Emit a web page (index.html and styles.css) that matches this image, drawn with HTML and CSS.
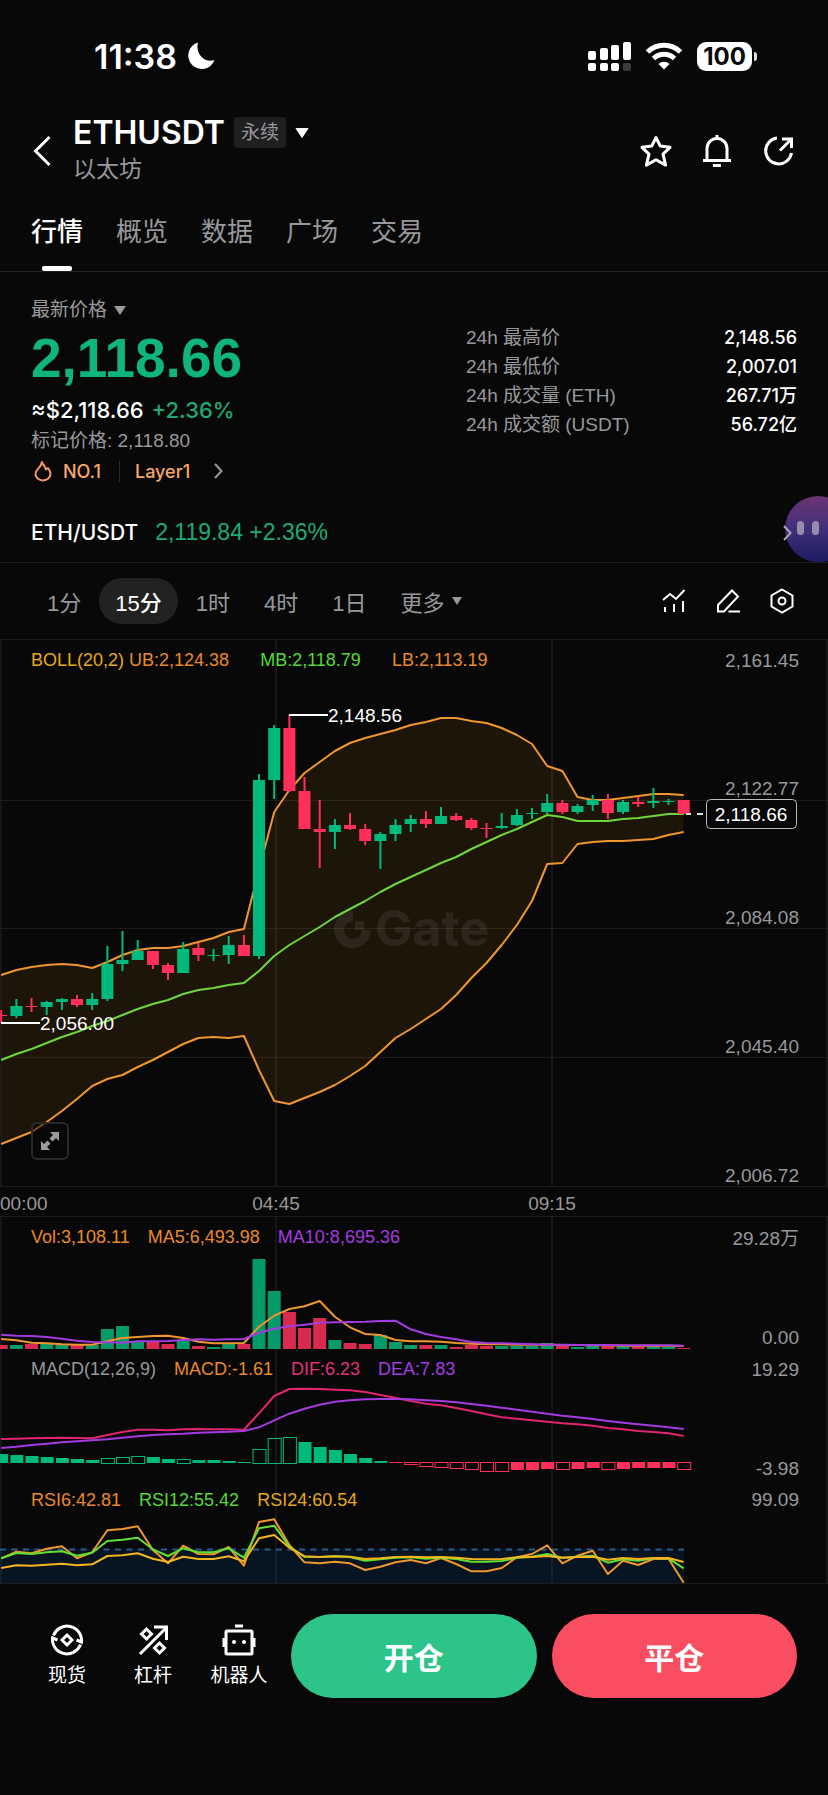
FILE: index.html
```html
<!DOCTYPE html>
<html lang="zh-CN">
<head>
<meta charset="UTF-8">
<meta name="viewport" content="width=device-width, initial-scale=1.0">
<title>ETHUSDT 永续</title>
<link rel="stylesheet" href="styles.css">
</head>
<body>
<div class="status-bar">
    <div class="status-time">
        <span>11:38</span>
        <svg width="28" height="28" viewBox="0 0 28 28"><path d="M11 .5A13.5 13.5 0 1 0 27.500 18C18 21.500 8 12 11 .5z" fill="#fff"/></svg>
    </div>
    <div class="status-icons">
        <svg width="43" height="30" viewBox="0 0 43 30" fill="#fff">
            <rect x="0" y="10" width="8" height="9" rx="2"/><rect x="12" y="7" width="8" height="12" rx="2"/>
            <rect x="23" y="4" width="8" height="15" rx="2"/><rect x="35" y="1" width="8" height="18" rx="2"/>
            <rect x="0" y="22" width="8" height="8" rx="2"/><rect x="12" y="22" width="8" height="8" rx="2"/>
            <rect x="23" y="22" width="8" height="8" rx="2"/><rect x="35" y="22" width="8" height="8" rx="2" fill="#3a3a3a"/>
        </svg>
        <svg width="38" height="28" viewBox="0 0 38 28" fill="none" stroke="#fff" stroke-width="5">
            <path d="M2.500 10a23.500 23.500 0 0 1 33 0"/>
            <path d="M8.500 16.500a15 15 0 0 1 21 0"/>
            <path d="M19 27.500l-5.500-5.500a8 8 0 0 1 11 0z" fill="#fff" stroke="none"/>
        </svg>
        <div class="battery">100</div>
    </div>
</div>

<header class="header">
    <button class="icon-btn back" aria-label="返回">
        <svg width="18" height="32" viewBox="0 0 18 32" fill="none" stroke="#fff" stroke-width="3"><path d="M16.500 2L2.500 16l14 14"/></svg>
    </button>
    <div class="title-block">
        <div class="title-row">
            <h1>ETHUSDT</h1>
            <span class="tag">永续</span>
            <svg width="14" height="10" viewBox="0 0 14 10"><path d="M1 .5h12L7 9.500z" fill="#fff" stroke="#fff" stroke-linejoin="round"/></svg>
        </div>
        <div class="subtitle">以太坊</div>
    </div>
    <div class="header-actions">
        <button class="icon-btn" aria-label="收藏">
            <svg width="34" height="34" viewBox="0 0 34 34" fill="none" stroke="#fff" stroke-width="3" stroke-linejoin="round"><path d="M17 3.500l4.300 8.600 9.700 1.200-7 6.800 2.600 11L17 25.800 7.400 31.100l2.600-11-7-6.800 9.700-1.200z"/></svg>
        </button>
        <button class="icon-btn" aria-label="提醒">
            <svg width="34" height="34" viewBox="0 0 34 34" fill="none" stroke="#fff" stroke-width="3"><path d="M7 26.500V14.500a10 10 0 0 1 20 0V26.500M3 26.500h28M17 1v4M13 31.500h8"/></svg>
        </button>
        <button class="icon-btn" aria-label="分享">
            <svg width="34" height="34" viewBox="0 0 34 34" fill="none" stroke="#fff" stroke-width="3"><path d="M16 4a13 13 0 1 0 14.500 15M21 5h9.500v9M30 5.500L19 16.500"/></svg>
        </button>
    </div>
</header>

<nav class="tabs">
    <a href="#" class="tab active">行情</a>
    <a href="#" class="tab">概览</a>
    <a href="#" class="tab">数据</a>
    <a href="#" class="tab">广场</a>
    <a href="#" class="tab">交易</a>
</nav>

<section class="summary">
    <div class="price-block">
        <button class="price-type">最新价格
            <svg width="12" height="9" viewBox="0 0 12 9"><path d="M0 0h12L6 9z" fill="#98989c"/></svg>
        </button>
        <div class="last-price">2,118.66</div>
        <div class="usd-price">≈$2,118.66 <span class="up">+2.36%</span></div>
        <div class="mark-price">标记价格: 2,118.80</div>
        <a href="#" class="rank">
            <svg width="18" height="22" viewBox="0 0 18 22" fill="none" stroke="#f59a63" stroke-width="2" stroke-linejoin="round"><path d="M8 2c1 3 3.500 4.500 4 7.500l2-1.500c1.500 2 2.500 4 2.500 6a7.500 6.500 0 0 1-15 0C1.500 9 7 8 8 2z"/></svg>
            <span class="rank-no">NO.1</span>
            <span class="rank-name">Layer1</span>
            <svg width="9" height="16" viewBox="0 0 9 16" fill="none" stroke="#98989c" stroke-width="2"><path d="M1 1l6.500 7L1 15"/></svg>
        </a>
    </div>
    <dl class="stats">
        <dt>24h 最高价</dt><dd>2,148.56</dd>
        <dt>24h 最低价</dt><dd>2,007.01</dd>
        <dt>24h 成交量 (ETH)</dt><dd>267.71万</dd>
        <dt>24h 成交额 (USDT)</dt><dd>56.72亿</dd>
    </dl>
</section>

<div class="spot-row">
    <span class="spot-pair">ETH/USDT</span>
    <span class="spot-price">2,119.84 +2.36%</span>
    <button class="assistant" aria-label="助手"><i></i><i></i></button>
    <svg class="spot-arrow" width="9" height="16" viewBox="0 0 9 16" fill="none" stroke="#a9a3b8" stroke-width="2"><path d="M1 1l6.500 7L1 15"/></svg>
</div>

<div class="intervals">
    <button class="interval">1分</button>
    <button class="interval active">15分</button>
    <button class="interval">1时</button>
    <button class="interval">4时</button>
    <button class="interval">1日</button>
    <button class="interval">更多
        <svg width="10" height="8" viewBox="0 0 10 8"><path d="M0 0h10L5 8z" fill="#98989c"/></svg>
    </button>
    <div class="chart-tools">
        <button class="icon-btn" aria-label="指标">
            <svg width="24" height="26" viewBox="0 0 24 26" fill="none" stroke="#fff" stroke-width="2"><path d="M1 12l7-6 6 5L22.500 2M3 19v5M12 16v8M21 13v11"/></svg>
        </button>
        <button class="icon-btn" aria-label="画线">
            <svg width="24" height="26" viewBox="0 0 24 26" fill="none" stroke="#fff" stroke-width="2"><path d="M2 23.500V17L16 2.500l6 6L8 23.500zM12.500 23.500H24"/></svg>
        </button>
        <button class="icon-btn" aria-label="设置">
            <svg width="24" height="26" viewBox="0 0 24 26" fill="none" stroke="#fff" stroke-width="2"><path d="M12 1.500l10.500 6v11L12 24.500l-10.500-6v-11z"/><circle cx="12" cy="13" r="3.500"/></svg>
        </button>
    </div>
</div>

<main class="charts">
    <div class="panel">
        <svg id="priceChart" class="chart" viewBox="0 640 828 577"></svg>
        <div class="legend legend-boll">
            <span class="yellow">BOLL(20,2)</span><span class="orange">UB:2,124.38</span><span class="green">MB:2,118.79</span><span class="orange">LB:2,113.19</span>
        </div>
        <button class="expand" aria-label="全屏">
            <svg width="20" height="20" viewBox="0 0 20 20" fill="#9a9a9a"><path d="M10 1h9v9l-3-3-3.500 3.500-3-3L13 4zM1 10v9h9l-3-3 3.500-3.500-3-3L4 13z"/></svg>
        </button>
    </div>
    <div class="panel">
        <svg id="volChart" class="chart" viewBox="0 17 828 132"></svg>
        <div class="legend">
            <span class="orange">Vol:3,108.11</span><span class="orange">MA5:6,493.98</span><span class="purple">MA10:8,695.36</span>
        </div>
    </div>
    <div class="panel">
        <svg id="macdChart" class="chart" viewBox="0 149 828 131"></svg>
        <div class="legend">
            <span class="gray">MACD(12,26,9)</span><span class="orange">MACD:-1.61</span><span class="pink">DIF:6.23</span><span class="purple">DEA:7.83</span>
        </div>
    </div>
    <div class="panel">
        <svg id="rsiChart" class="chart" viewBox="0 280 828 104"></svg>
        <div class="legend">
            <span class="orange">RSI6:42.81</span><span class="green">RSI12:55.42</span><span class="yellow">RSI24:60.54</span>
        </div>
    </div>
</main>

<footer class="bottom-bar">
    <a href="#" class="nav-item">
        <svg width="34" height="34" viewBox="0 0 34 34" fill="none" stroke="#fff" stroke-width="3"><path d="M3.500 12.500a14.500 14.500 0 0 1 28 6.500l-5-2M30.500 21.500a14.500 14.500 0 0 1-28-6.500l5 2M17 12l5 5-5 5-5-5z"/></svg>
        <span>现货</span>
    </a>
    <a href="#" class="nav-item">
        <svg width="34" height="34" viewBox="0 0 34 34" fill="none" stroke="#fff" stroke-width="3"><path d="M4 31L30 5M18 4h12.500v13M10.500 6l5 5-5 5-5-5zM23.500 20l5 5-5 5-5-5z"/></svg>
        <span>杠杆</span>
    </a>
    <a href="#" class="nav-item">
        <svg width="34" height="34" viewBox="0 0 34 34" fill="none" stroke="#fff" stroke-width="3"><rect x="4" y="8" width="26" height="23" rx="1"/><path d="M13 3h8M2 15v9M32 15v9"/><circle cx="12" cy="19" r="2" fill="#fff" stroke="none"/><circle cx="22" cy="19" r="2" fill="#fff" stroke="none"/></svg>
        <span>机器人</span>
    </a>
    <button class="trade open">开仓</button>
    <button class="trade close">平仓</button>
</footer>

<script>
    const STEP = 15.167;
    const GREEN = '#00b97c';
    const RED = '#ff2f5b';
    const GRID = '#1c1c1c';
    const ORANGE = '#f0962e';
    const PURPLE = '#a33be0';

    // direction, body top, body bottom, high, low
    const candles = [
        ['r', 1015, 1016, 1010, 1023], ['g', 1006, 1016, 999, 1018], ['r', 1006, 1007, 998, 1012],
        ['g', 1002, 1007, 1001, 1015], ['g', 999, 1002, 998, 1010], ['r', 999, 1005, 995, 1007],
        ['g', 999, 1005, 993, 1010], ['g', 964, 999, 946, 1001], ['g', 960, 964, 931, 971],
        ['g', 951, 960, 940, 960], ['r', 951, 965, 951, 969], ['r', 965, 973, 963, 980],
        ['g', 949, 973, 942, 973], ['r', 948, 955, 943, 961], ['g', 955, 956, 949, 961],
        ['g', 945, 955, 936, 964], ['r', 945, 956, 935, 956], ['g', 780, 956, 774, 959],
        ['g', 728, 780, 725, 799], ['r', 728, 791, 715, 792], ['r', 791, 829, 777, 829],
        ['r', 829, 832, 800, 868], ['g', 825, 832, 819, 849], ['r', 825, 829, 813, 830],
        ['r', 829, 841, 824, 845], ['g', 834, 841, 832, 869], ['g', 825, 834, 819, 841],
        ['g', 819, 824, 815, 832], ['r', 819, 824, 811, 828], ['g', 816, 824, 807, 824],
        ['r', 816, 820, 813, 821], ['r', 820, 828, 818, 830], ['r', 828, 829, 823, 838],
        ['g', 826, 828, 813, 829], ['g', 815, 825, 809, 826], ['g', 813, 814, 808, 819],
        ['g', 803, 812, 794, 814], ['r', 803, 812, 800, 814], ['g', 806, 812, 804, 814],
        ['g', 800, 805, 795, 811], ['r', 800, 813, 794, 819], ['g', 802, 812, 800, 814],
        ['r', 802, 804, 797, 807], ['g', 801, 803, 788, 808], ['g', 801, 802, 799, 805],
        ['r', 800, 814, 800, 814]
    ];

    const upper = [975, 970, 967, 965, 964, 965, 968, 962, 955, 950, 948, 948, 946, 942, 938, 932, 929, 870, 812, 790, 773, 762, 751, 743, 738, 734, 730, 725, 722, 718, 718, 721, 723, 728, 735, 744, 766, 771, 797, 800, 800, 798, 796, 794, 794, 795];
    const middle = [1060, 1054, 1049, 1043, 1037, 1032, 1026, 1021, 1015, 1009, 1004, 1000, 994, 990, 988, 985, 983, 971, 956, 945, 936, 927, 917, 909, 901, 892, 884, 877, 870, 863, 857, 849, 842, 835, 829, 822, 815, 817, 821, 821, 821, 819, 818, 816, 814, 814];
    const lower = [1144, 1138, 1132, 1122, 1111, 1099, 1086, 1079, 1075, 1067, 1060, 1052, 1044, 1038, 1037, 1038, 1036, 1070, 1101, 1104, 1098, 1092, 1085, 1076, 1066, 1052, 1038, 1029, 1019, 1009, 995, 978, 963, 945, 925, 901, 864, 863, 844, 842, 841, 841, 840, 839, 835, 832];

    const volume = [4, 4, 5, 5, 4, 4, 4, 20, 23, 8, 8, 5, 8, 3, 2, 5, 5, 90, 58, 37, 21, 31, 9, 6, 5, 14, 7, 4, 4, 4, 2, 4, 3, 3, 3, 3, 6, 3, 2, 3, 3, 3, 3, 3, 2, 1];
    const ma5 = [417, 421, 428, 430, 433, 434, 434, 424, 414, 411, 408, 407, 414, 425, 430, 430, 429, 380, 347, 327, 319, 303, 350, 382, 402, 405, 420, 424, 424, 425, 429, 431, 433, 433, 434, 434, 434, 435, 435, 436, 436, 437, 437, 437, 437, 438];
    const ma10 = [404, 407, 408, 411, 416, 422, 426, 427, 428, 424, 424, 423, 420, 418, 419, 418, 417, 398, 386, 379, 374, 368, 367, 366, 365, 363, 362, 388, 402, 411, 418, 426, 429, 430, 431, 433, 434, 434, 435, 435, 435, 436, 436, 436, 436, 437];

    // bar height, 1 when the bar is hollow
    const macd = [[9, 0], [8, 0], [7, 0], [6, 0], [5, 0], [4, 0], [3, 0], [5, 1], [6, 1], [7, 1], [6, 0], [4, 0], [4, 1], [3, 0], [3, 0], [2, 0], [1, 0], [14, 1], [25, 1], [26, 1], [21, 0], [16, 0], [13, 0], [9, 0], [5, 0], [2, 0],
        [-1, 0], [-2, 1], [-4, 1], [-5, 1], [-6, 1], [-7, 1], [-9, 1], [-9, 1], [-8, 0], [-8, 0], [-7, 0], [-7, 1], [-7, 0], [-6, 0], [-7, 1], [-7, 0], [-6, 0], [-6, 0], [-6, 0], [-7, 1]];
    const dif = [717, 716, 715, 714, 713, 714, 715, 705, 696, 689, 689, 691, 688, 687, 688, 688, 689, 640, 588, 567, 566, 567, 569, 571, 576, 585, 593, 603, 611, 616, 624, 633, 643, 652, 656, 661, 665, 670, 673, 677, 684, 688, 693, 696, 700, 708];
    const dea = [744, 740, 735, 731, 727, 724, 721, 718, 713, 709, 705, 703, 701, 698, 697, 695, 693, 682, 661, 641, 626, 614, 605, 601, 598, 597, 597, 598, 601, 603, 607, 612, 617, 623, 629, 635, 641, 647, 652, 657, 663, 668, 673, 677, 682, 687];

    const rsi6 = [1075, 1055, 1060, 1046, 1039, 1075, 1057, 991, 987, 979, 1050, 1090, 1037, 1062, 1063, 1041, 1097, 966, 958, 1035, 1087, 1090, 1085, 1090, 1110, 1100, 1087, 1080, 1090, 1074, 1092, 1114, 1114, 1104, 1072, 1062, 1036, 1090, 1067, 1052, 1122, 1082, 1095, 1077, 1076, 1148];
    const rsi12 = [1075, 1059, 1062, 1057, 1054, 1067, 1058, 1023, 1019, 1013, 1048, 1068, 1045, 1057, 1057, 1045, 1073, 985, 977, 1040, 1070, 1071, 1069, 1071, 1082, 1078, 1073, 1072, 1076, 1073, 1077, 1085, 1085, 1083, 1073, 1070, 1062, 1073, 1070, 1067, 1088, 1078, 1082, 1075, 1075, 1105];
    const rsi24 = [1104, 1096, 1097, 1094, 1091, 1096, 1093, 1068, 1066, 1060, 1076, 1086, 1070, 1077, 1077, 1069, 1084, 1015, 1005, 1043, 1069, 1071, 1069, 1070, 1077, 1075, 1071, 1070, 1072, 1071, 1073, 1077, 1078, 1077, 1072, 1071, 1068, 1073, 1071, 1070, 1079, 1074, 1077, 1074, 1074, 1086];

    function x(i) {
        return 1.2 + STEP * i;
    }

    // the indicator series are stored at three times the chart scale
    function third(series) {
        return series.map(v => v / 3);
    }

    function points(series) {
        return series.map((y, i) => `${x(i).toFixed(1)},${y.toFixed(1)}`);
    }

    function line(series, color) {
        return `<polyline points="${points(series).join(' ')}" fill="none" stroke="${color}" stroke-width="2" stroke-linejoin="round"/>`;
    }

    function rect(left, top, w, h, fill) {
        return `<rect x="${left.toFixed(1)}" y="${top}" width="${w}" height="${h}" fill="${fill}"/>`;
    }

    function verticals(top, height) {
        return [0, 275, 551, 826].map(left => rect(left, top, 2, height, '#161616')).join('');
    }

    function label(left, y, text, cls) {
        return `<text x="${left}" y="${y}" class="${cls}">${text}</text>`;
    }

    function drawPrice() {
        let out = verticals(640, 547);
        [800, 928, 1057, 1186, 1216].forEach(y => out += rect(0, y, 828, 1, GRID));

        const band = points(upper).concat(points(lower).reverse());
        out += `<polygon points="${band.join(' ')}" fill="#ffa014" fill-opacity="0.09"/>`;

        out += `<g class="watermark"><path d="M353 911v10a9 9 0 1 0 9 9h9a18.500 18.500 0 1 1-18-19zM355 921h9v9h-9z"/>`
            + `<text x="375" y="946">Gate</text></g>`;

        out += line(upper, ORANGE) + line(lower, ORANGE) + line(middle, '#6fd63a');
        candles.forEach(([dir, top, bottom, high, low], i) => {
            const color = dir === 'g' ? GREEN : RED;
            out += rect(x(i) - 1, high, 2, low - high, color);
            out += rect(x(i) - 6, top, 12, bottom - top, color);
        });

        out += rect(289, 714, 39, 2, '#fff') + label(328, 722, '2,148.56', 'mark');
        out += rect(1, 1022, 39, 2, '#fff') + label(40, 1030, '2,056.00', 'mark');

        [[667, '2,161.45'], [795, '2,122.77'], [924, '2,084.08'], [1053, '2,045.40'], [1182, '2,006.72']]
            .forEach(([y, text]) => out += label(799, y, text, 'axis end'));
        out += rect(686, 813, 5, 2, '#ddd') + rect(697, 813, 6, 2, '#ddd');
        out += '<rect x="706.5" y="799.5" width="90" height="29" rx="4" fill="#080808" stroke="#bbb"/>';
        out += label(751, 821, '2,118.66', 'mark middle');

        out += label(0, 1210, '00:00', 'axis') + label(276, 1210, '04:45', 'axis middle') + label(552, 1210, '09:15', 'axis middle');
        document.getElementById('priceChart').innerHTML = out;
    }

    function drawVolume() {
        let out = verticals(17, 132);
        volume.forEach((h, i) => {
            out += rect(x(i) - 6.5, 149 - h, 13, h, candles[i][0] === 'g' ? '#059a69' : '#d92b50');
        });
        out += line(third(ma5), ORANGE) + line(third(ma10), PURPLE);
        out += label(799, 45, '29.28万', 'axis end') + label(799, 144, '0.00', 'axis end');
        document.getElementById('volChart').innerHTML = out;
    }

    function drawMacd() {
        let out = verticals(149, 131);
        macd.forEach(([h, hollow], i) => {
            const color = h > 0 ? GREEN : RED;
            const top = h > 0 ? 263 - h : 262;
            const size = Math.abs(h);
            if (hollow) {
                out += `<rect x="${(x(i) - 6).toFixed(1)}" y="${top + 0.5}" width="13" height="${size}" fill="none" stroke="${color}"/>`;
            } else {
                out += rect(x(i) - 6, top, 13, size, color);
            }
        });
        out += line(third(dif), '#e0246e') + line(third(dea), PURPLE);
        out += label(799, 176, '19.29', 'axis end') + label(799, 275, '-3.98', 'axis end');
        document.getElementById('macdChart').innerHTML = out;
    }

    function drawRsi() {
        let out = verticals(280, 104);
        out += rect(0, 349, 684, 35, 'rgba(0, 90, 160, 0.17)');
        out += '<path d="M0 349.500H684" stroke="#2c5a8c" stroke-width="2" stroke-dasharray="6 5.500"/>';
        out += line(third(rsi6), ORANGE) + line(third(rsi12), '#62e032') + line(third(rsi24), '#f5b51e');
        out += rect(0, 383, 828, 1, GRID);
        out += label(799, 306, '99.09', 'axis end');
        document.getElementById('rsiChart').innerHTML = out;
    }

    drawPrice();
    drawVolume();
    drawMacd();
    drawRsi();
</script>
</body>
</html>
```
FILE: styles.css
```css
* {
    box-sizing: border-box;
}
body {
    margin: 0;
    background-color: #080808;
    color: #fff;
    font-family: "Liberation Sans", "Noto Sans CJK SC", sans-serif;
    overflow-x: hidden;
}
button {
    padding: 0;
    border: none;
    background: none;
    color: inherit;
    font: inherit;
    cursor: pointer;
}
a {
    color: inherit;
    text-decoration: none;
}
svg {
    display: block;
    flex: none;
}

/* status bar */
.status-bar {
    display: flex;
    justify-content: space-between;
    align-items: center;
    height: 112px;
    padding: 0 71px 0 94px;
}
.status-time {
    display: flex;
    align-items: center;
    gap: 10px;
    font: 600 34px "Inter", sans-serif;
}
.status-icons {
    display: flex;
    align-items: center;
    gap: 14px;
}
.battery {
    position: relative;
    width: 55px;
    height: 29px;
    margin-right: 5px;
    border-radius: 9px;
    background-color: #fff;
    color: #080808;
    font: 700 24px/29px "Inter", sans-serif;
    text-align: center;
}
.battery::after {
    content: "";
    position: absolute;
    top: 10px;
    right: -5px;
    width: 3px;
    height: 9px;
    border-radius: 0 4px 4px 0;
    background-color: #ddd;
}

/* header */
.header {
    display: flex;
    align-items: center;
    height: 78px;
    padding: 0 33px 0 33px;
}
.back {
    width: 40px;
}
.title-block {
    padding-bottom: 5px;
}
.title-row {
    display: flex;
    align-items: center;
    gap: 9px;
    height: 40px;
}
h1 {
    margin: 0;
    font: 600 32px "Inter", sans-serif;
}
.tag {
    padding: 0 7px;
    border-radius: 4px;
    background-color: #1f1f1f;
    color: #98989c;
    font-size: 19px;
    line-height: 31px;
}
.subtitle {
    color: #98989c;
    font-size: 23px;
    line-height: 32px;
}
.header-actions {
    display: flex;
    gap: 27px;
    margin-left: auto;
}

/* tabs */
.tabs {
    display: flex;
    gap: 33px;
    height: 82px;
    padding: 0 31px;
    border-bottom: 1px solid #242424;
}
.tab {
    position: relative;
    color: #98989c;
    font-size: 26px;
    line-height: 84px;
}
.tab.active {
    color: #fff;
    font-weight: 500;
}
.tab.active::after {
    content: "";
    position: absolute;
    bottom: 0;
    left: 50%;
    width: 30px;
    height: 5px;
    margin-left: -15px;
    border-radius: 2px;
    background-color: #fff;
}

/* price summary */
.summary {
    display: flex;
    justify-content: space-between;
    padding: 24px 31px 0;
}
.price-type {
    display: flex;
    align-items: center;
    gap: 7px;
    color: #98989c;
    font-size: 19px;
    line-height: 28px;
}
.last-price {
    height: 70px;
    color: #0fb57c;
    font-size: 55px;
    font-weight: bold;
    line-height: 68px;
}
.usd-price {
    font: 500 22px/32px "Inter", sans-serif;
}
.up {
    color: #1faa74;
}
.usd-price .up {
    margin-left: 2px;
}
.mark-price {
    color: #98989c;
    font-size: 19px;
    line-height: 29px;
}
.rank {
    display: flex;
    align-items: center;
    height: 32px;
    padding-left: 3px;
    color: #f9a869;
    font: 500 18px "Inter", sans-serif;
}
.rank-no {
    margin-left: 11px;
    padding-right: 18px;
    border-right: 1px solid #2a2a2a;
}
.rank-name {
    margin: 0 24px 0 15px;
}
.stats {
    display: grid;
    grid-template-columns: 1fr auto;
    align-content: start;
    width: 331px;
    margin: 27px 0 0;
    font-size: 19px;
    line-height: 29px;
}
.stats dt {
    color: #98989c;
}
.stats dd {
    margin: 0;
    font-family: "Inter", "Noto Sans CJK SC", sans-serif;
    font-size: 18px;
    font-weight: 500;
    text-align: right;
}

/* spot pair */
.spot-row {
    position: relative;
    display: flex;
    align-items: center;
    gap: 17px;
    height: 76px;
    padding: 16px 36px 0 31px;
    border-bottom: 1px solid #1c1c1c;
    overflow: hidden;
}
.spot-pair {
    font: 500 21px "Inter", sans-serif;
}
.spot-price {
    color: #1faa74;
    font-size: 23px;
}
.spot-arrow {
    position: relative;
    margin-left: auto;
}
.assistant {
    position: absolute;
    right: -23px;
    bottom: 0;
    display: flex;
    gap: 8px;
    width: 66px;
    height: 66px;
    padding: 25px 0 0 12px;
    border-radius: 50%;
    background: linear-gradient(#6b3570, #46307c 45%, #1c1c62);
}
.assistant i {
    width: 7px;
    height: 14px;
    border-radius: 4px;
    background-color: #968cab;
}

/* interval picker */
.intervals {
    display: flex;
    align-items: center;
    gap: 2px;
    height: 77px;
    padding: 0 34px 0 31px;
    border-bottom: 1px solid #1c1c1c;
}
.interval {
    display: flex;
    align-items: center;
    gap: 7px;
    height: 46px;
    padding: 0 16px;
    border-radius: 23px;
    color: #98989c;
    font-size: 22px;
}
.interval.active {
    background-color: #222;
    color: #fff;
    font-weight: 500;
}
.chart-tools {
    display: flex;
    gap: 30px;
    margin-left: auto;
}

/* charts */
.panel {
    position: relative;
}
.chart {
    width: 100%;
    height: auto;
}
.legend {
    position: absolute;
    top: 10px;
    left: 31px;
    display: flex;
    gap: 18px;
    font-size: 18px;
    line-height: 20px;
}
.legend-boll {
    gap: 31px;
}
.legend-boll span:first-child {
    margin-right: -26px;
}
.yellow {
    color: #e6a817;
}
.orange {
    color: #e8892c;
}
.green {
    color: #55d836;
}
.purple {
    color: #a33be0;
}
.pink {
    color: #e0307a;
}
.gray {
    color: #98989c;
}
.chart text {
    font-size: 19px;
}
.axis {
    fill: #98989c;
}
.mark {
    fill: #fff;
}
.end {
    text-anchor: end;
}
.middle {
    text-anchor: middle;
}
.watermark {
    fill: #fff;
    opacity: 0.07;
}
.chart .watermark text {
    font: 700 50px "Inter", sans-serif;
}
.expand {
    position: absolute;
    bottom: 57px;
    left: 31px;
    display: flex;
    justify-content: center;
    align-items: center;
    width: 38px;
    height: 38px;
    border: 2px solid #2a2a2a;
    border-radius: 6px;
    background-color: rgba(8, 8, 8, 0.5);
}

/* bottom bar */
.bottom-bar {
    display: flex;
    align-items: center;
    padding: 30px 31px 97px 24px;
}
.nav-item {
    display: flex;
    flex-direction: column;
    align-items: center;
    gap: 5px;
    width: 86px;
    font-size: 19px;
    line-height: 28px;
}
.trade {
    flex: 1;
    height: 84px;
    border-radius: 42px;
    font-size: 30px;
    font-weight: bold;
}
.open {
    margin: 0 15px 0 9px;
    background-color: #2dc48a;
}
.close {
    background-color: #f94d61;
}
```
